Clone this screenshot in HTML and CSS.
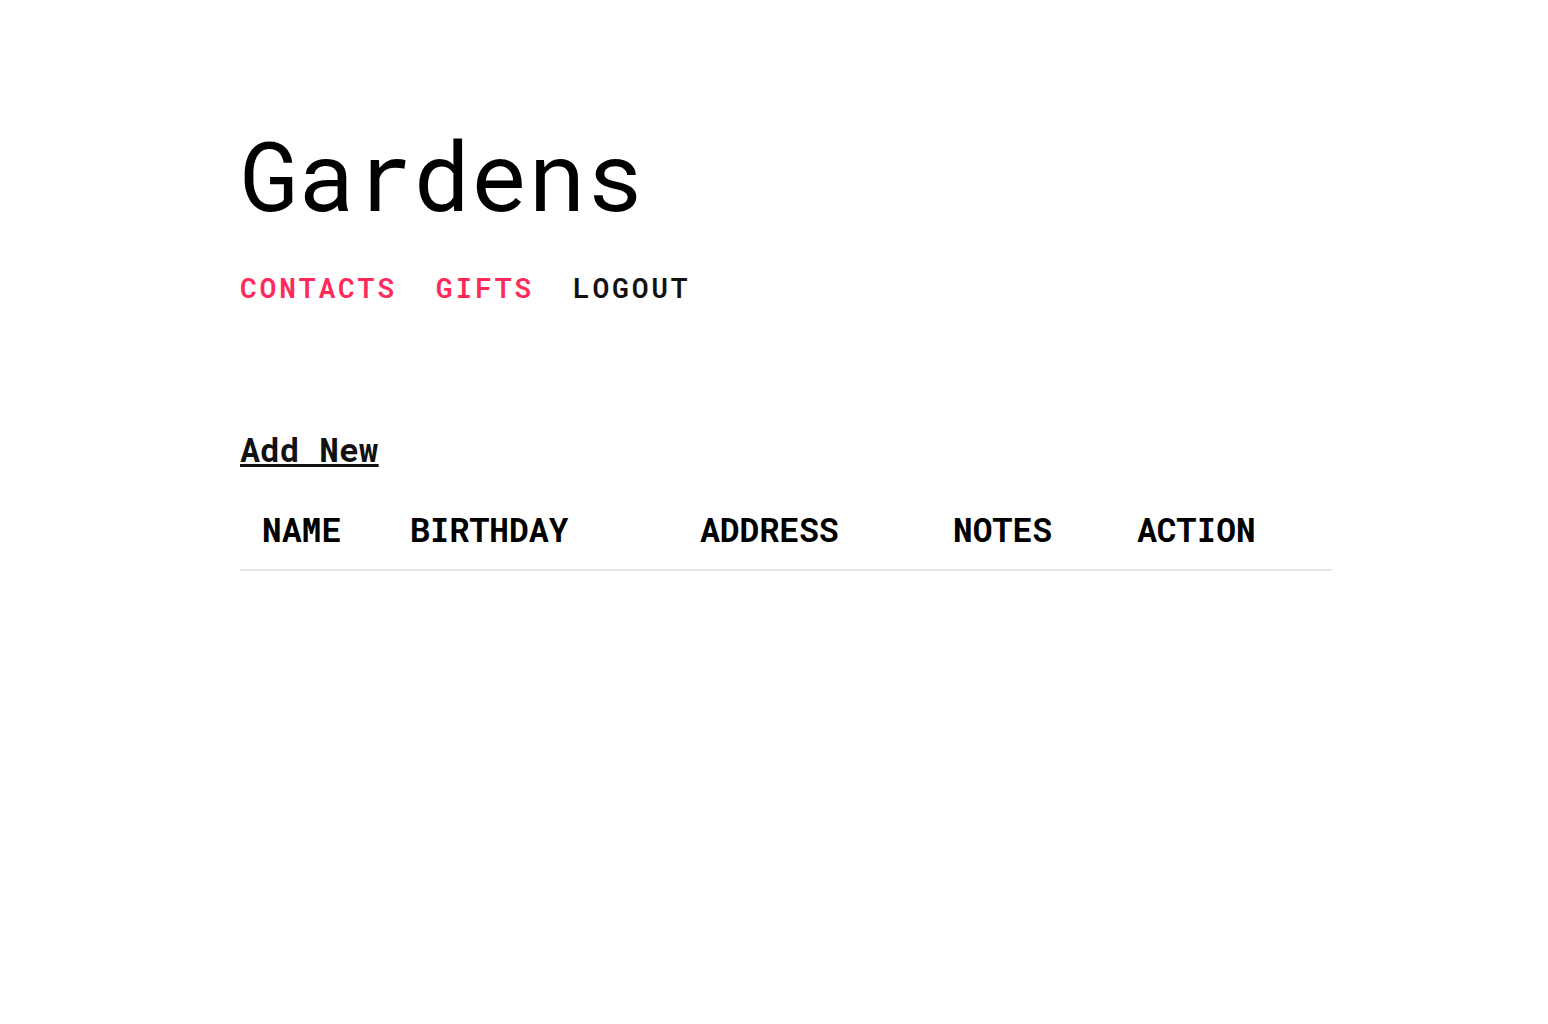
FILE: index.html
```html
<!DOCTYPE html>
<html>
<head>
<meta charset="utf-8">
<link rel="stylesheet" href="styles.css">
</head>
<body>
<div class="page">
  <h1 class="title">Gardens</h1>
  <nav class="nav">
    <a class="nav-link active" href="#">CONTACTS</a>
    <a class="nav-link active" href="#">GIFTS</a>
    <a class="nav-link" href="#">LOGOUT</a>
  </nav>
  <a class="add-new" href="#">Add New</a>
  <table class="table">
    <colgroup>
      <col class="c-name"><col class="c-bday"><col class="c-addr"><col class="c-notes"><col class="c-action">
    </colgroup>
    <thead>
      <tr>
        <th>NAME</th><th>BIRTHDAY</th><th>ADDRESS</th><th>NOTES</th><th>ACTION</th>
      </tr>
    </thead>
    <tbody></tbody>
  </table>
</div>
</body>
</html>
```
FILE: styles.css
```css
html, body { margin: 0; padding: 0; background: #fff; }
body { font-family: "Roboto Mono", "DejaVu Sans Mono", "Liberation Mono", monospace; color: #000; }
.page { width: 1092px; padding: 104px 0 0 240px; display: flex; flex-direction: column; align-items: flex-start; }
.title { font-size: 96px; font-weight: 400; margin: 0; line-height: 140px; letter-spacing: 0; }
.nav { display: flex; gap: 39px; margin-top: 24px; }
.nav-link { font-size: 28px; font-weight: 600; letter-spacing: 0.1em; color: #111; text-decoration: none; line-height: 40px; }
.nav-link.active { color: #ff2a5a; }
.add-new { margin-top: 121px; font-size: 33px; font-weight: 700; color: #111; text-decoration: underline; line-height: 40px; }
.table { margin-top: 40px; width: 1092px; border-collapse: collapse; table-layout: fixed; }
.table th { text-align: left; font-size: 33px; font-weight: 700; padding: 0 0 20px 22px; border-bottom: 2px solid #e6e6e6; line-height: 40px; }
.c-name { width: 148px; }
.c-bday { width: 290px; }
.c-addr { width: 253px; }
.c-notes { width: 184px; }
.c-action { width: 217px; }
```
